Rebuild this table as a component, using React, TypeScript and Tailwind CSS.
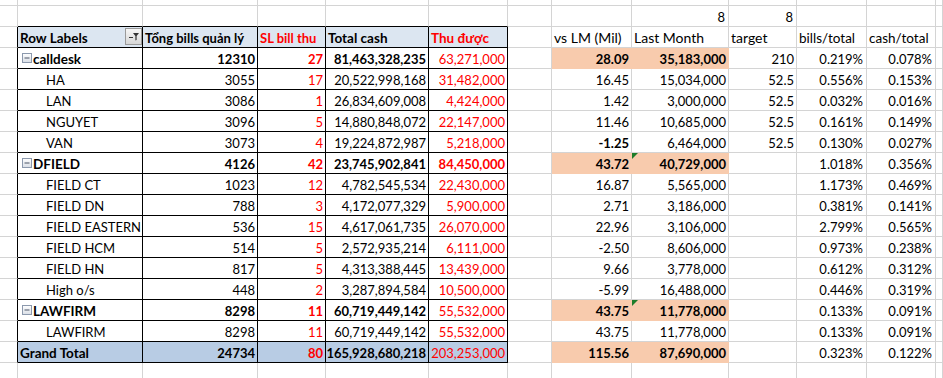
import React from "react";

const W = [
  "w-[18px]",
  "w-[125px]",
  "w-[115px]",
  "w-[68px]",
  "w-[103px]",
  "w-[79px]",
  "w-[44px]",
  "w-[80px]",
  "w-[97px]",
  "w-[68px]",
  "w-[70px]",
  "w-[69px]",
  "w-[7px]",
];

type R = {
  label: string;
  kind: "group" | "child" | "total";
  c: string;
  d: string;
  e: string;
  f: string;
  h: string;
  i: string;
  j: string;
  k: string;
  l: string;
  hBold?: boolean;
  fBold?: boolean;
  tri?: boolean;
};

const rows: R[] = [
  { label: "calldesk", kind: "group", c: "12310", d: "27", e: "81,463,328,235", f: "63,271,000", h: "28.09", i: "35,183,000", j: "210", k: "0.219%", l: "0.078%" },
  { label: "HA", kind: "child", c: "3055", d: "17", e: "20,522,998,168", f: "31,482,000", h: "16.45", i: "15,034,000", j: "52.5", k: "0.556%", l: "0.153%" },
  { label: "LAN", kind: "child", c: "3086", d: "1", e: "26,834,609,008", f: "4,424,000", h: "1.42", i: "3,000,000", j: "52.5", k: "0.032%", l: "0.016%" },
  { label: "NGUYET", kind: "child", c: "3096", d: "5", e: "14,880,848,072", f: "22,147,000", h: "11.46", i: "10,685,000", j: "52.5", k: "0.161%", l: "0.149%" },
  { label: "VAN", kind: "child", c: "3073", d: "4", e: "19,224,872,987", f: "5,218,000", h: "-1.25", i: "6,464,000", j: "52.5", k: "0.130%", l: "0.027%", hBold: true },
  { label: "DFIELD", kind: "group", c: "4126", d: "42", e: "23,745,902,841", f: "84,450,000", h: "43.72", i: "40,729,000", j: "", k: "1.018%", l: "0.356%", fBold: true, tri: true },
  { label: "FIELD CT", kind: "child", c: "1023", d: "12", e: "4,782,545,534", f: "22,430,000", h: "16.87", i: "5,565,000", j: "", k: "1.173%", l: "0.469%" },
  { label: "FIELD DN", kind: "child", c: "788", d: "3", e: "4,172,077,329", f: "5,900,000", h: "2.71", i: "3,186,000", j: "", k: "0.381%", l: "0.141%" },
  { label: "FIELD EASTERN", kind: "child", c: "536", d: "15", e: "4,617,061,735", f: "26,070,000", h: "22.96", i: "3,106,000", j: "", k: "2.799%", l: "0.565%" },
  { label: "FIELD HCM", kind: "child", c: "514", d: "5", e: "2,572,935,214", f: "6,111,000", h: "-2.50", i: "8,606,000", j: "", k: "0.973%", l: "0.238%" },
  { label: "FIELD HN", kind: "child", c: "817", d: "5", e: "4,313,388,445", f: "13,439,000", h: "9.66", i: "3,778,000", j: "", k: "0.612%", l: "0.312%" },
  { label: "High o/s", kind: "child", c: "448", d: "2", e: "3,287,894,584", f: "10,500,000", h: "-5.99", i: "16,488,000", j: "", k: "0.446%", l: "0.319%" },
  { label: "LAWFIRM", kind: "group", c: "8298", d: "11", e: "60,719,449,142", f: "55,532,000", h: "43.75", i: "11,778,000", j: "", k: "0.133%", l: "0.091%", tri: true },
  { label: "LAWFIRM", kind: "child", c: "8298", d: "11", e: "60,719,449,142", f: "55,532,000", h: "43.75", i: "11,778,000", j: "", k: "0.133%", l: "0.091%" },
  { label: "Grand Total", kind: "total", c: "24734", d: "80", e: "165,928,680,218", f: "203,253,000", h: "115.56", i: "87,690,000", j: "", k: "0.323%", l: "0.122%" },
];

function Cell({
  col,
  className = "",
  children,
}: {
  col: number;
  className?: string;
  children?: React.ReactNode;
}) {
  return (
    <div
      className={`${W[col]} h-full shrink-0 border-r border-b flex items-center overflow-visible whitespace-nowrap relative ${className}`}
    >
      {children}
    </div>
  );
}

const G = "border-[#d4d4d4]";
const BK = "border-black";
const SAL = "bg-[#f8cbad] border-[#f8cbad]";

function MinusBox() {
  return (
    <svg width="10" height="10" viewBox="0 0 10 10" className="shrink-0">
      <defs>
        <linearGradient id="mb" x1="0" y1="0" x2="0" y2="1">
          <stop offset="0" stopColor="#ffffff" />
          <stop offset="1" stopColor="#d9dee6" />
        </linearGradient>
      </defs>
      <rect x="0.5" y="0.5" width="9" height="9" fill="url(#mb)" stroke="#8c99ad" />
      <rect x="2.5" y="4.5" width="5" height="1" fill="#4a5566" />
    </svg>
  );
}

function FilterBtn() {
  return (
    <svg width="17" height="17" viewBox="0 0 17 17" className="absolute right-0 top-[1px]">
      <defs>
        <linearGradient id="fb" x1="0" y1="0" x2="0" y2="1">
          <stop offset="0" stopColor="#f7f7f7" />
          <stop offset="1" stopColor="#d6d6d6" />
        </linearGradient>
      </defs>
      <rect x="0.5" y="0.5" width="16" height="16" fill="url(#fb)" stroke="#9a9a9a" />
      <path d="M8 5 H14 L11.6 8 V12 L10.4 12.6 V8 Z" fill="#333" />
      <rect x="4" y="9" width="4" height="1" fill="#333" />
    </svg>
  );
}

function Row({ children }: { children: React.ReactNode }) {
  return <div className="flex h-[21px] leading-[20px]">{children}</div>;
}

export default function App() {
  const txt = "pt-[1px]";
  return (
    <div
      className="w-[943px] h-[378px] overflow-hidden bg-white text-black text-[13px]"
      style={{ fontFamily: "Lato, 'Open Sans', sans-serif" }}
    >
      <div className="flex h-[6px]">
        {W.map((_, c) => (
          <Cell key={c} col={c} className={G} />
        ))}
      </div>
      <Row>
        {W.map((_, c) => {
          const pivotTop = c >= 1 && c <= 5;
          return (
            <Cell
              key={c}
              col={c}
              className={`${pivotTop ? "border-b-black border-r-[#d4d4d4]" : G} ${c === 8 || c === 9 ? "justify-end pr-[3px]" : ""} ${txt}`}
            >
              {c === 8 || c === 9 ? "8" : null}
            </Cell>
          );
        })}
      </Row>
      <Row>
        <Cell col={0} className={`border-b-[#d4d4d4] border-r-black`} />
        <Cell col={1} className={`${BK} bg-[#dce6f1] font-bold pl-[2px] text-[13.5px] ${txt}`}>
          Row Labels
          <FilterBtn />
        </Cell>
        <Cell col={2} className={`${BK} bg-[#dce6f1] font-bold pl-[2px] ${txt}`}>
          Tổng bills quản lý
        </Cell>
        <Cell col={3} className={`${BK} bg-[#dce6f1] font-bold text-[#ff0000] pl-[2px] ${txt}`}>
          SL bill thu
        </Cell>
        <Cell col={4} className={`${BK} bg-[#dce6f1] font-bold pl-[2px] text-[13.5px] ${txt}`}>
          Total cash
        </Cell>
        <Cell col={5} className={`${BK} bg-[#dce6f1] font-bold text-[#ff0000] pl-[2px] text-[13.5px] ${txt}`}>
          Thu được
        </Cell>
        <Cell col={6} className={G} />
        <Cell col={7} className={`${G} pl-[2px] text-[14px] ${txt}`}>vs LM (Mil)</Cell>
        <Cell col={8} className={`${G} pl-[2px] text-[14px] ${txt}`}>Last Month</Cell>
        <Cell col={9} className={`${G} pl-[2px] text-[14px] ${txt}`}>target</Cell>
        <Cell col={10} className={`${G} pl-[2px] text-[13.5px] ${txt}`}>bills/total</Cell>
        <Cell col={11} className={`${G} pl-[2px] text-[13.5px] ${txt}`}>cash/total</Cell>
        <Cell col={12} className={G} />
      </Row>
      {rows.map((r, idx) => {
        const grp = r.kind !== "child";
        const tot = r.kind === "total";
        const pbg = tot ? "bg-[#b8cce4]" : "";
        const num = `justify-end pr-[2px] ${txt}`;
        const sal = grp;
        return (
          <Row key={idx}>
            <Cell col={0} className={`border-b-[#d4d4d4] border-r-black`} />
            <Cell
              col={1}
              className={`${BK} ${pbg} ${grp ? "font-bold text-[13.5px]" : "text-[13px]"} ${r.kind === "group" ? "pl-[4px]" : r.kind === "child" ? "pl-[28px]" : "pl-[2px]"} ${txt}`}
            >
              {r.kind === "group" ? (
                <span className="flex items-center gap-[1px]">
                  <span className="-mt-[1px] flex">
                    <MinusBox />
                  </span>
                  <span>{r.label}</span>
                </span>
              ) : (
                r.label
              )}
            </Cell>
            <Cell col={2} className={`${BK} ${pbg} ${grp ? "font-bold" : ""} ${num}`}>
              {r.c}
            </Cell>
            <Cell col={3} className={`${BK} ${pbg} text-[#ff0000] ${grp ? "font-bold" : ""} ${num}`}>
              {r.d}
            </Cell>
            <Cell col={4} className={`${BK} ${pbg} ${grp ? "font-bold" : ""} ${num}`}>
              {r.e}
            </Cell>
            <Cell col={5} className={`${BK} ${pbg} text-[#ff0000] ${r.fBold ? "font-bold" : ""} ${num}`}>
              {r.f}
            </Cell>
            <Cell col={6} className={G} />
            <Cell col={7} className={`${sal ? SAL : G} ${grp || r.hBold ? "font-bold" : ""} ${num}`}>
              {r.h}
            </Cell>
            <Cell col={8} className={`${sal ? SAL : G} ${grp ? "font-bold" : ""} ${num}`}>
              {r.tri ? (
                <span className="absolute left-0 top-0 w-0 h-0 border-t-[6px] border-t-[#1e7d2a] border-r-[6px] border-r-transparent" />
              ) : null}
              {r.i}
            </Cell>
            <Cell col={9} className={`${G} ${num}`}>
              {r.j}
            </Cell>
            <Cell col={10} className={`${G} justify-end pr-[3px] ${txt}`}>
              {r.k}
            </Cell>
            <Cell col={11} className={`${G} justify-end pr-[3px] ${txt}`}>
              {r.l}
            </Cell>
            <Cell col={12} className={G} />
          </Row>
        );
      })}
      <Row>
        {W.map((_, c) => (
          <Cell key={c} col={c} className={G} />
        ))}
      </Row>
    </div>
  );
}
